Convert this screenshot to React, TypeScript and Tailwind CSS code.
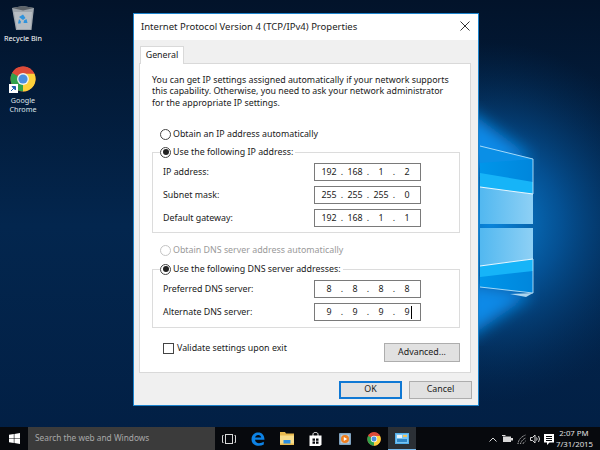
import React from "react";

const font = { fontFamily: '"Noto Sans", "Open Sans", sans-serif' };

function Wallpaper() {
  return (
    <svg className="absolute inset-0" width="600" height="450" viewBox="0 0 600 450">
      <defs>
        <linearGradient id="base" x1="0" y1="0" x2="0" y2="1">
          <stop offset="0" stopColor="#02132a" />
          <stop offset="0.5" stopColor="#03264e" />
          <stop offset="1" stopColor="#021f44" />
        </linearGradient>
        <radialGradient id="glow" gradientUnits="userSpaceOnUse" cx="490" cy="222" r="180">
          <stop offset="0" stopColor="#0a86dc" stopOpacity="1" />
          <stop offset="0.4" stopColor="#05589f" stopOpacity="0.85" />
          <stop offset="1" stopColor="#03305f" stopOpacity="0" />
        </radialGradient>
        <linearGradient id="top1" x1="0" y1="0" x2="1" y2="0">
          <stop offset="0" stopColor="#0096ea" />
          <stop offset="1" stopColor="#0086dc" />
        </linearGradient>
        <linearGradient id="light" x1="0" y1="0" x2="1" y2="0">
          <stop offset="0" stopColor="#52b8f0" />
          <stop offset="1" stopColor="#8ed0f5" />
        </linearGradient>
        <filter id="blur"><feGaussianBlur stdDeviation="8" /></filter>
      </defs>
      <rect width="600" height="450" fill="url(#base)" />
      <rect width="600" height="450" fill="url(#glow)" />
      <path d="M465 108L533 159L465 170Z" fill="#0d8ae8" filter="url(#blur)" />
      <path d="M465 340L533 293L465 282Z" fill="#0d8ae8" filter="url(#blur)" />
      <path d="M533 159L480 146V224H533Z" fill="url(#top1)" />
      <path d="M480 146L533 159L480 163Z" fill="#0a8fe6" />
      <path d="M480 173L533 182V194L480 187Z" fill="#16b4f8" />
      <path d="M480 187L533 194V224H480Z" fill="url(#light)" />
      <path d="M480 187L533 194" stroke="#e8f7ff" strokeWidth="1.1" />
      <path d="M480 146L533 159V194" stroke="#cdeeff" strokeWidth="0.8" fill="none" />
      <path d="M480 228H533V293L480 287Z" fill="url(#top1)" />
      <path d="M480 228H533V259L480 266Z" fill="url(#light)" />
      <path d="M480 266L533 259V271L480 277Z" fill="#16b4f8" />
      <path d="M480 266L533 259" stroke="#e8f7ff" strokeWidth="1.1" />
      <path d="M533 259V293L480 287" stroke="#cdeeff" strokeWidth="0.8" fill="none" />
      <path d="M510 294L533 293L526 297Z" fill="#d8f2ff" opacity="0.8" />
    </svg>
  );
}

function Recycle() {
  return (
    <svg width="24" height="26" viewBox="0 0 24 26">
      <path d="M1 3L12 1L23 3L20.5 25H5Z" fill="#9fa6ad" />
      <path d="M1 3L12 1L23 3L12 5.5Z" fill="#5d6369" />
      <path d="M3 7L21 7L19.5 24H6Z" fill="#b7bdc3" />
      <path d="M8 12L12 9.5L14.5 13L12 15Z M15.5 14L16.5 18H12.5L13 15.5Z M8 14L10 16.5L9.5 18.5H7Z" fill="#2f93dc" />
    </svg>
  );
}

function Chrome({ size }: { size: number }) {
  return (
    <svg width={size} height={size} viewBox="0 0 48 48">
      <circle cx="24" cy="24" r="23" fill="#dd4b39" />
      <path d="M24 24L4.1 12.5A23 23 0 0 0 24 47Z" fill="#31a24c" />
      <path d="M24 14H45A23 23 0 0 1 24 47L24 24Z" fill="#fdd13a" />
      <path d="M24 24L4.1 12.5A23 23 0 0 1 45 14H24Z" fill="#dd4b39" />
      <circle cx="24" cy="24" r="11" fill="#f2f2f2" />
      <circle cx="24" cy="24" r="8.5" fill="#4a8fe0" />
    </svg>
  );
}

function Radio({ checked, disabled }: { checked?: boolean; disabled?: boolean }) {
  return (
    <span
      className={`flex w-[11px] h-[11px] shrink-0 items-center justify-center rounded-full border bg-white ${
        disabled ? "border-[#c4c4c4]" : "border-[#444444]"
      }`}
    >
      {checked && <span className="w-[6px] h-[6px] rounded-full bg-[#222222]" />}
    </span>
  );
}

function RadioRow({ label, checked, disabled }: { label: string; checked?: boolean; disabled?: boolean }) {
  return (
    <div className={`flex items-center gap-[2px] h-[12px] bg-white pr-[2px] ${disabled ? "text-[#9a9a9a]" : ""}`}>
      <Radio checked={checked} disabled={disabled} />
      <span>{label}</span>
    </div>
  );
}

function IpField({ parts, caret }: { parts: string[]; caret?: boolean }) {
  return (
    <div className="relative w-[107px] h-[18px] border border-[#7a7a7a] bg-white grid grid-cols-[26px_26px_26px_26px] pl-[1px] items-center text-center">
      {parts.map((p, i) => (
        <span key={i} className="relative">
          {p}
          {i < 3 && <span className="absolute right-[-1px] top-0">.</span>}
        </span>
      ))}
      {caret && <span className="absolute left-[96px] top-[2px] w-px h-[13px] bg-black" />}
    </div>
  );
}

function FieldRow({ label, parts, caret }: { label: string; parts: string[]; caret?: boolean }) {
  return (
    <div className="flex items-center justify-between">
      <span>{label}</span>
      <IpField parts={parts} caret={caret} />
    </div>
  );
}

function Group({ legend, children }: { legend: string; children: React.ReactNode }) {
  return (
    <fieldset className="border border-[#dcdcdc] w-[308px] pl-[10px] pr-[38px]">
      <legend className="-ml-[3px]">
        <RadioRow label={legend} checked />
      </legend>
      {children}
    </fieldset>
  );
}

function PushButton({ label, wide, focus }: { label: string; wide?: boolean; focus?: boolean }) {
  return (
    <div
      className={`flex items-center justify-center ${wide ? "w-[76px] h-[19px]" : "w-[63px] h-[18px]"} bg-[#e1e1e1] ${
        focus ? "border-2 border-[#0f78d4]" : "border border-[#adadad]"
      }`}
    >
      {label}
    </div>
  );
}

function Dialog() {
  return (
    <div
      style={font}
      className="absolute left-[133px] top-[13px] w-[346px] h-[393px] border border-[#1c83cc] bg-[#f0f0f0] flex flex-col text-[8.85px] leading-[11.4px] text-[#1a1a1a]"
    >
      <div className="h-[26px] bg-white flex items-center justify-between pl-[7px] pr-[8px] shrink-0">
        <span className="text-[9.5px] text-[#222222]">Internet Protocol Version 4 (TCP/IPv4) Properties</span>
        <svg width="10" height="10" viewBox="0 0 10 10" className="mt-[-2px]">
          <path d="M0.5 0.5L9.5 9.5M9.5 0.5L0.5 9.5" stroke="#333333" strokeWidth="1" />
        </svg>
      </div>
      <div className="flex-1 flex flex-col px-[5px] pt-[6px]">
        <div className="relative z-10 w-[44px] h-[18px] -mb-px ml-[1px] bg-white border border-b-0 border-[#d9d9d9] flex items-center justify-center">
          General
        </div>
        <div className="h-[310px] w-[332px] bg-white border border-[#d9d9d9] pl-[12px] pt-[11px]">
          <p className="whitespace-nowrap">
            You can get IP settings assigned automatically if your network supports
            <br />
            this capability. Otherwise, you need to ask your network administrator
            <br />
            for the appropriate IP settings.
          </p>
          <div className="ml-[8px] mt-[19px] mb-[6px]">
            <RadioRow label="Obtain an IP address automatically" />
          </div>
          <Group legend="Use the following IP address:">
            <div className="flex flex-col gap-[5px] pt-[5px] pb-[5px]">
              <FieldRow label="IP address:" parts={["192", "168", "1", "2"]} />
              <FieldRow label="Subnet mask:" parts={["255", "255", "255", "0"]} />
              <FieldRow label="Default gateway:" parts={["192", "168", "1", "1"]} />
            </div>
          </Group>
          <div className="ml-[8px] mt-[11px] mb-[7px]">
            <RadioRow label="Obtain DNS server address automatically" disabled />
          </div>
          <Group legend="Use the following DNS server addresses:">
            <div className="flex flex-col gap-[5px] pt-[5px] pb-[6px]">
              <FieldRow label="Preferred DNS server:" parts={["8", "8", "8", "8"]} />
              <FieldRow label="Alternate DNS server:" parts={["9", "9", "9", "9"]} caret />
            </div>
          </Group>
          <div className="flex items-start justify-between w-[308px] pl-[11px] mt-[15px]">
            <div className="flex items-center gap-[3px]">
              <span className="w-[11px] h-[11px] border border-[#444444] bg-white" />
              <span>Validate settings upon exit</span>
            </div>
            <PushButton label="Advanced..." wide />
          </div>
        </div>
        <div className="flex justify-end gap-[7px] mt-[8px] pr-[1px]">
          <PushButton label="OK" focus />
          <PushButton label="Cancel" />
        </div>
      </div>
    </div>
  );
}

function Taskbar() {
  return (
    <div style={font} className="relative h-[23px] w-full bg-[#07090d] flex items-center text-[9px]">
      <div className="w-[28px] flex justify-center">
        <svg width="11" height="11" viewBox="0 0 11 11">
          <path d="M0 1.7L4.8 1V5.2H0ZM5.4 0.9L11 0V5.2H5.4ZM0 5.8H4.8V10L0 9.3ZM5.4 5.8H11V11L5.4 10.1Z" fill="#ffffff" />
        </svg>
      </div>
      <div className="w-[187px] h-full bg-[#3b3b3b] text-[#a8a8a8] flex items-center pl-[7px] text-[8.3px]">Search the web and Windows</div>
      <div className="w-[28px] flex justify-center">
        <svg width="14" height="10" viewBox="0 0 14 10" fill="none" stroke="#d8d8d8" strokeWidth="1">
          <rect x="3.5" y="0.5" width="7" height="9" />
          <path d="M1.5 1.5H0.5V8.5H1.5M12.5 1.5H13.5V8.5H12.5" />
        </svg>
      </div>
      <div className="w-[29px] flex justify-center">
        <svg width="14" height="14" viewBox="0 0 14 14">
          <path d="M7.3 0.5C11 0.5 13.5 3.2 13.5 7.8H4C4.2 10 6 11.2 8 11.2C9.7 11.2 11.4 10.7 12.8 9.8V12.6C11.3 13.4 9.5 13.8 7.6 13.8C3.2 13.8 0.5 11.4 0.5 7.3C0.5 3.4 3.2 0.5 7.3 0.5ZM4.1 5.6H10.2C10 3.9 8.9 3 7.2 3C5.6 3 4.5 4 4.1 5.6Z" fill="#0d83e6" />
        </svg>
      </div>
      <div className="w-[29px] flex justify-center">
        <svg width="14" height="13" viewBox="0 0 14 13">
          <path d="M0 0H5L6 1.5H14V13H0Z" fill="#e8b94e" />
          <rect x="0" y="3.5" width="14" height="9.5" fill="#f7dc8a" />
          <rect x="3.5" y="8" width="7" height="5" fill="#2b8fe0" />
          <rect x="0" y="11.5" width="14" height="1.5" fill="#e8b94e" />
        </svg>
      </div>
      <div className="w-[29px] flex justify-center">
        <svg width="13" height="14" viewBox="0 0 13 14">
          <path d="M4 4V2.5C4 1 5 0.5 6.5 0.5S9 1 9 2.5V4" stroke="#ffffff" strokeWidth="1" fill="none" />
          <path d="M0.5 3.5H12.5V12.5L11 14H0.5Z" fill="#ffffff" />
          <path d="M3.5 6.5H6V8.7H3.5ZM7 6.5H9.5V8.7H7ZM3.5 9.5H6V11.7H3.5ZM7 9.5H9.5V11.7H7Z" fill="#07090d" />
        </svg>
      </div>
      <div className="w-[29px] flex justify-center">
        <svg width="12" height="12" viewBox="0 0 12 12">
          <rect width="12" height="12" rx="1" fill="#7fa3c0" />
          <rect x="1.5" y="1.5" width="9" height="9" fill="#b9cbd9" />
          <circle cx="6" cy="6" r="4" fill="#ef7f1f" />
          <path d="M4.8 3.9L8.2 6L4.8 8.1Z" fill="#ffffff" />
        </svg>
      </div>
      <div className="w-[29px] flex justify-center">
        <Chrome size={14} />
      </div>
      <div className="relative w-[28px] h-full bg-[#2b3036] flex justify-center items-center">
        <svg width="14" height="11" viewBox="0 0 14 11">
          <rect width="14" height="11" fill="#52aeea" />
          <rect x="1" y="1" width="12" height="9" fill="#79c4f2" />
          <rect x="2" y="2" width="5" height="3" fill="#e9f4fb" />
          <rect x="8" y="2" width="4" height="2" fill="#f1c35e" />
          <rect x="2" y="6" width="10" height="3" fill="#2e86c8" />
        </svg>
        <span className="absolute left-0 right-0 bottom-0 h-[1px] bg-[#76b9ed]" />
      </div>
      <div className="flex-1 flex items-center justify-end pr-[8px]">
        <svg width="70" height="14" viewBox="0 0 70 14" fill="none" stroke="#d8d8d8" strokeWidth="1">
          <path d="M3.5 9.5L7 6L10.5 9.5" />
          <path d="M17 4.5H25V10H17Z M25 6H27V8.5H25Z" fill="#d8d8d8" stroke="none" />
          <path d="M16 3.5H19.5" />
          <path d="M32 12Q32.5 6 39.5 3M34.5 12Q35 8.5 39.5 6M37 12Q37.5 10.5 39.5 9" strokeDasharray="1 0.7" />
          <path d="M44.5 5.5H46.5L49 3V11L46.5 8.5H44.5Z" />
          <path d="M50.5 5.5Q51.8 7 50.5 8.5M52.5 4Q54.5 7 52.5 10" />
          <path d="M58 2H68V10.5H63.5L61 13V10.5H58Z" fill="#ffffff" stroke="none" />
          <path d="M60 4.5H66M60 6.5H66M60 8.5H66" stroke="#07090d" />
        </svg>
        <div className="w-[36px] text-center text-[#e0e0e0] text-[7.8px] leading-[10.5px]">
          <div>2:07 PM</div>
          <div className="whitespace-nowrap">7/31/2015</div>
        </div>
      </div>
    </div>
  );
}

export default function App() {
  return (
    <div style={font} className="relative w-[600px] h-[450px] overflow-hidden flex flex-col">
      <Wallpaper />
      <div className="relative flex-1">
        <div className="absolute left-[3px] top-[5px] w-[40px] flex flex-col items-center text-white text-[7.2px] leading-[9px] text-center">
          <Recycle />
          <span className="mt-[3px] whitespace-nowrap">Recycle Bin</span>
        </div>
        <div className="absolute left-[3px] top-[66px] w-[40px] flex flex-col items-center text-[#dfe5ea] text-[7.2px] leading-[9px] text-center">
          <div className="relative">
            <Chrome size={26} />
            <span className="absolute left-[-1px] bottom-[-1px] w-[9px] h-[9px] bg-white flex items-center justify-center">
              <svg width="7" height="7" viewBox="0 0 7 7"><path d="M1 6L4 3M2 1.5H5.5V5Z" stroke="#1f5fae" strokeWidth="1" fill="#1f5fae" /></svg>
            </span>
          </div>
          <span className="mt-[4px]">Google<br />Chrome</span>
        </div>
        <Dialog />
      </div>
      <Taskbar />
    </div>
  );
}
